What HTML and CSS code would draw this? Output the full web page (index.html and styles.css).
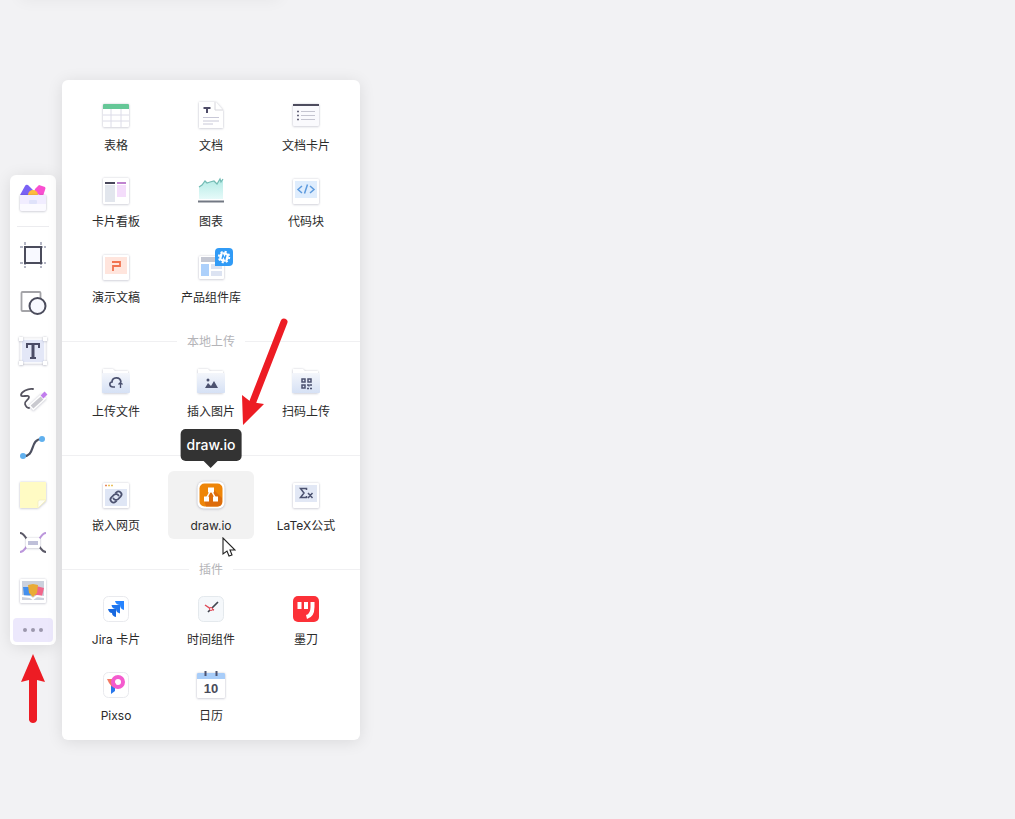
FILE: index.html
```html
<!doctype html>
<html lang="zh-CN">
  <head>
    <meta charset="utf-8" />
    <meta name="viewport" content="width=device-width, initial-scale=1" />
    <title>白板</title>
    <link rel="stylesheet" href="styles.css">
  </head>
  <body>
    <main class="board">
      <div class="top-shadow"></div>
      <div class="dock">
        <nav class="toolbar" aria-label="工具栏">
          <button class="tool tool-first" aria-label="素材">
            <svg class="icon" viewBox="0 0 36 36">
              <path d="M5 15 10 6Q11 4 13 5L18 10 16 17Z" fill="#7a62f5"/>
              <path d="m20 9 4-4 6 2q1 1 0 3l-2 6-9-3Z" fill="#f94fd0"/>
              <circle cx="18" cy="15" r="5" fill="#ffbd3d"/>
              <path class="card" d="M5 15h26v14q0 2-2 2H7q-2 0-2-2Z" fill="#f1edff"/>
              <path d="M5 24h26v5q0 2-2 2H7q-2 0-2-2Z" fill="#fbfaff"/>
              <rect x="14" y="20" width="8" height="4" rx="1" fill="#dfe2fa"/>
            </svg>
          </button>
          <hr class="toolbar-line">
          <button class="tool" aria-label="画框">
            <svg class="icon" viewBox="0 0 36 36" fill="none">
              <path d="M10 5v26M26 5v26M5 10h26M5 26h26" stroke="#b4b6c4" stroke-width="2" stroke-dasharray="3 1"/>
              <rect x="10" y="10" width="16" height="16" fill="#f8f9ff" stroke="#4b4c5c" stroke-width="2"/>
            </svg>
          </button>
          <button class="tool" aria-label="图形">
            <svg class="icon" viewBox="0 0 36 36">
              <rect x="6.500" y="7" width="19" height="19" rx="1" fill="#fff" stroke="#a4a4a8" stroke-width="1.800"/>
              <circle cx="22.500" cy="21" r="8" fill="#f8f9ff" stroke="#4b4c5c" stroke-width="2"/>
            </svg>
          </button>
          <button class="tool" aria-label="文本">
            <svg class="icon" viewBox="0 0 36 36">
              <rect class="card" x="6" y="6" width="24" height="24" fill="#e3e7f7" stroke="#fff" stroke-width="1.500"/>
              <path class="card" d="M4 4h4v4H4zM28 4h4v4h-4zM4 28h4v4H4zM28 28h4v4h-4z" fill="#fff"/>
              <path d="M12 15v-4h12v4M15 25h6" fill="none" stroke="#4b4c66" stroke-width="2"/>
              <path d="M18 11v14" stroke="#4b4c66" stroke-width="3"/>
            </svg>
          </button>
          <button class="tool" aria-label="画笔">
            <svg class="icon" viewBox="0 0 36 36" fill="none">
              <path d="M18 8C13 7 6 11 6 14s8-1 8 2-5 4-4 7 3 4 4 4" stroke="#55535f" stroke-width="1.800" stroke-linecap="round"/>
              <path class="card" d="m16 27 13-12" stroke="#fff" stroke-width="7"/>
              <path d="m17 26 10-9" stroke="#c9c9cf" stroke-width="4"/>
              <path d="m27 16 4-4" stroke="#c17ded" stroke-width="4"/>
            </svg>
          </button>
          <button class="tool" aria-label="连线">
            <svg class="icon" viewBox="0 0 36 36" fill="none">
              <path d="M8 27c13 1 6-17 19-17" stroke="#4d5060" stroke-width="2.200"/>
              <circle cx="8" cy="27" r="3" fill="#60b0ee"/>
              <circle cx="27" cy="10" r="3" fill="#60b0ee"/>
            </svg>
          </button>
          <button class="tool" aria-label="便签">
            <svg class="icon" viewBox="0 0 36 36">
              <path class="card" d="M5 5h26v19l-8 7H5Z" fill="#fffbc4"/>
              <path d="M31 23h-6q-2 0-2 2v6Z" fill="#fffef0" stroke="#f1edc0" stroke-width=".7"/>
            </svg>
          </button>
          <button class="tool" aria-label="思维导图">
            <svg class="icon" viewBox="0 0 36 36" fill="none" stroke-width="2">
              <path d="M5 8c6 0 5 9 13 10 8 1 7 9 13 9" stroke="#5b5967"/>
              <path d="M31 8c-6 0-5 9-13 10-8 1-7 9-13 9" stroke="#bc97dc"/>
              <rect class="card" x="11" y="13" width="14" height="10" rx="1" fill="#fff"/>
              <path d="M13 18h10" stroke="#bfc0d9" stroke-width="4"/>
            </svg>
          </button>
          <button class="tool" aria-label="资源">
            <svg class="icon" viewBox="0 0 36 36">
              <rect class="card" x="5" y="6" width="26" height="24" rx="1" fill="#fff"/>
              <path d="M7 8h22v19H7z" fill="#cbd1dd"/>
              <path d="M8 14h8l2 8-9 1Z" fill="#438fed"/>
              <path d="m21 13 8 2-2 8-8-1Z" fill="#f1668b"/>
              <path d="m13 12 5-1 5 1-1 8-4 4-4-4Z" fill="#e9ab36"/>
              <path d="m7 23 8 1 3 2 4-3 7 1" stroke="#fff" stroke-width="2" fill="none"/>
            </svg>
          </button>
          <button class="tool-more" aria-label="更多" aria-expanded="true">
            <span class="dot"></span><span class="dot"></span><span class="dot"></span>
          </button>
        </nav>

        <section class="panel" aria-label="更多工具">
          <div class="grid">
            <button class="item">
              <svg class="icon" viewBox="0 0 36 36">
                <rect class="card" x="5" y="7" width="26" height="23" rx="1" fill="#fff"/>
                <path d="M5 18h26M5 24h26M13 12v18M23 12v18" stroke="#dcdce8" fill="none"/>
                <path d="M5 12V8q0-1 1-1h24q1 0 1 1v4Z" fill="#65c797"/>
              </svg>
              <span class="label">表格</span>
            </button>
            <button class="item">
              <svg class="icon" viewBox="0 0 36 36" fill="none">
                <path class="card" d="M6 5h17l7 8v18H6Z" fill="#fff"/>
                <path d="M22 5v8h8" stroke="#d6d6dc"/>
                <path d="M10.500 11h7M14 11v5" stroke="#4e4c67" stroke-width="2"/>
                <path d="M10 20.500h16M10 24h16M10 27h10" stroke="#c8c8d7"/>
              </svg>
              <span class="label">文档</span>
            </button>
            <button class="item">
              <svg class="icon" viewBox="0 0 36 36" fill="none">
                <rect class="card" x="5" y="7" width="26" height="22" rx="1" fill="#fafafd"/>
                <path d="M5 8h26" stroke="#4d4c5e" stroke-width="2"/>
                <path d="M13 14.500h14M13 18.500h14M13 22.500h14" stroke="#c5c5d0"/>
                <path d="M9 14.500h2M9 18.500h2M9 22.500h2" stroke="#66657a" stroke-width="1.500"/>
              </svg>
              <span class="label">文档卡片</span>
            </button>
            <button class="item">
              <svg class="icon" viewBox="0 0 36 36">
                <rect class="card" x="5" y="5" width="26" height="26" rx="1" fill="#fff"/>
                <path d="M7 12h10v17H7z" fill="#e2e6ed"/>
                <path d="M19 12h9v12h-9z" fill="#f4ddfb"/>
                <path d="M7 10h10" stroke="#48475a" stroke-width="2"/>
                <path d="M19 10h9" stroke="#bf83cf" stroke-width="2"/>
              </svg>
              <span class="label">卡片看板</span>
            </button>
            <button class="item">
              <svg class="icon" viewBox="0 0 36 36" fill="none">
                <defs>
                  <linearGradient id="chart-fill" x2="0" y2="1">
                    <stop stop-color="#b3ebe5"/>
                    <stop offset="1" stop-color="#e6faf9"/>
                  </linearGradient>
                </defs>
                <path d="m6 14 3-2 3-4 2 2 3-1 4-1 3 3 3-5 1 3 2-3v20H6Z" fill="url(#chart-fill)"/>
                <path d="m6 14 3-2 3-4 2 2 3-1 4-1 3 3 3-5 1 3 2-3" stroke="#72bbb4" stroke-width="1.200"/>
                <path d="M5 28.500h26" stroke="#727883" stroke-width="2"/>
              </svg>
              <span class="label">图表</span>
            </button>
            <button class="item">
              <svg class="icon" viewBox="0 0 36 36" fill="none">
                <rect class="card" x="5" y="6" width="26" height="25" rx="1" fill="#fff"/>
                <path d="M7 8h22v17H7z" fill="#dfedfd"/>
                <path d="m14 13-4 3.500 4 3.500M22 13l4 3.500-4 3.500M19.500 11.500l-3 9" stroke="#5c9ade" stroke-width="1.500"/>
              </svg>
              <span class="label">代码块</span>
            </button>
            <button class="item">
              <svg class="icon" viewBox="0 0 36 36" fill="none">
                <rect class="card" x="5" y="6" width="26" height="25" rx="1" fill="#fff"/>
                <path d="M7 8h22v17H7z" fill="#ffe5dd"/>
                <path d="M14 13h8v4h-7v5" stroke="#f17350" stroke-width="1.800"/>
              </svg>
              <span class="label">演示文稿</span>
            </button>
            <button class="item">
              <svg class="icon" viewBox="0 0 36 36" fill="none">
                <rect class="card" x="6" y="7" width="25" height="23" rx="1" fill="#fff"/>
                <path d="M8 8h15v5H8z" fill="#c5c8d3"/>
                <path d="M8 15h8v12H8z" fill="#acd0fb"/>
                <path d="M18 15h11v5H18zM18 22h11v5H18z" fill="#dce3f2"/>
                <path d="M26-1h10q4 0 4 4v10q0 4-4 4H22V3q0-4 4-4Z" fill="#319bf6"/>
                <circle cx="31" cy="8" r="4.800" fill="#fff"/>
                <circle cx="31" cy="8" r="5.300" stroke="#fff" stroke-width="1.800" stroke-dasharray="2.100 2.060"/>
                <path d="m29 10 1-4 2 4 1-4" stroke="#319bf6" stroke-width="1.300"/>
              </svg>
              <span class="label">产品组件库</span>
            </button>
          </div>

          <div class="divider"><span>本地上传</span></div>

          <div class="grid">
            <button class="item">
              <svg class="icon" viewBox="0 0 36 36" fill="none">
                <defs>
                  <linearGradient id="folder-fill" x2="0" y2="1">
                    <stop stop-color="#f4f6fb"/>
                    <stop offset="1" stop-color="#d6e1f5"/>
                  </linearGradient>
                </defs>
                <path class="card" d="M5 30V6h10l2 2h13v22Z" fill="#fff"/>
                <rect x="4" y="10" width="28" height="20" rx="1" fill="url(#folder-fill)"/>
                <path d="M17 24h-2c-4 0-4-5-1-5 0-5 8-6 9 0" stroke="#4c5270" stroke-width="1.700"/>
                <path d="M22.500 25v-5M20.500 21.500l2-2 2 2" stroke="#4c5270" stroke-width="1.300"/>
              </svg>
              <span class="label">上传文件</span>
            </button>
            <button class="item">
              <svg class="icon" viewBox="0 0 36 36">
                <path class="card" d="M5 30V6h10l2 2h13v22Z" fill="#fff"/>
                <rect x="4" y="10" width="28" height="20" rx="1" fill="url(#folder-fill)"/>
                <path d="m12 25 3-5 3 3 3-5 4 7Z" fill="#4c5270"/>
                <circle cx="15" cy="17" r="1.500" fill="#4c5270"/>
              </svg>
              <span class="label">插入图片</span>
            </button>
            <button class="item">
              <svg class="icon" viewBox="0 0 36 36" fill="none" stroke="#4c5270" stroke-width="1.500">
                <path class="card" d="M5 30V6h10l2 2h13v22Z" fill="#fff" stroke="none"/>
                <rect x="4" y="10" width="28" height="20" rx="1" fill="url(#folder-fill)" stroke="none"/>
                <path d="M14 16h3v3h-3zM20 16h3v3h-3zM14 22h3v3h-3zM19 22h2v1.500M22 22h2M19 25.500h2M22 25.500h2"/>
              </svg>
              <span class="label">扫码上传</span>
            </button>
          </div>

          <div class="divider divider-plain"></div>

          <div class="grid">
            <button class="item">
              <svg class="icon" viewBox="0 0 36 36" fill="none">
                <rect class="card" x="5" y="6" width="26" height="25" rx="1" fill="#fff"/>
                <path d="M7 12h22v17H7z" fill="#dfe6f5"/>
                <path d="M7 8.500h2" stroke="#e8895c" stroke-width="1.500"/>
                <path d="M10 8.500h2M13 8.500h2" stroke="#eac15e" stroke-width="1.500"/>
                <g transform="rotate(-45 18 20)" stroke="#4c5270" stroke-width="1.700">
                  <path d="M16 23h-1.500a3 3 0 0 1 0-6H18a3 3 0 0 1 2.500 4.500"/>
                  <path d="M20 17h1.500a3 3 0 0 1 0 6H18a3 3 0 0 1-2.500-4.500"/>
                </g>
              </svg>
              <span class="label">嵌入网页</span>
            </button>
            <button class="item item-active" aria-describedby="drawio-tip">
              <svg class="icon" viewBox="0 0 36 36">
                <rect class="card" x="4.500" y="4.500" width="27" height="27" rx="6" fill="#fff"/>
                <rect x="6.500" y="6.500" width="23" height="23" rx="5" fill="#ee8508"/>
                <path d="m20 12 9 9v4q0 4.500-5 4.500H13l-2-7Z" fill="#dd6c0c"/>
                <path d="m18 13-5 9M18 13l5 9" stroke="#fff" stroke-width="1.500"/>
                <path d="M15 10.500h6v5h-6zM11 19.500h5v5h-5zM20 19.500h5v5h-5z" fill="#fff"/>
              </svg>
              <span class="label">draw.io</span>
              <span class="tooltip" id="drawio-tip" role="tooltip">draw.io</span>
              <svg class="cursor" viewBox="0 0 14 20">
                <path d="M1 1v16l4-3 2 5 3-1-2-5h5Z" fill="#fff" stroke="#222" stroke-width="1.100"/>
              </svg>
            </button>
            <button class="item">
              <svg class="icon" viewBox="0 0 36 36" fill="none">
                <rect class="card" x="5" y="6" width="26" height="25" rx="1" fill="#fff"/>
                <path d="M7 8h22v17H7z" fill="#e2e8f5"/>
                <path d="M18.500 13v-1.500h-6L16 16l-3.500 4.500h6V19M20 16l4.500 5M24.500 16 20 21" stroke="#4c5270" stroke-width="1.500"/>
              </svg>
              <span class="label">LaTeX公式</span>
            </button>
          </div>

          <div class="divider"><span>插件</span></div>

          <div class="grid">
            <button class="item">
              <svg class="icon" viewBox="0 0 36 36">
                <rect x="5.500" y="5.500" width="25" height="25" rx="5" fill="#fff" stroke="#e9eaee"/>
                <path d="M17 10h9v9q-4-1-4-5-4 0-5-4Z" fill="#2684ff"/>
                <path d="M13.500 14h8.500v8.500q-4-1-4-4.500-4 0-4.500-4Z" fill="#2076ee"/>
                <path d="M10 18h8v8q-4-1-4-4-3 0-4-4Z" fill="#1768df"/>
              </svg>
              <span class="label">Jira 卡片</span>
            </button>
            <button class="item">
              <svg class="icon" viewBox="0 0 36 36" fill="none">
                <rect x="5.500" y="5.500" width="25" height="25" rx="5" fill="#f5f8fb" stroke="#e4e9ed"/>
                <path d="m19 17 6-6M17 19l-2 2" stroke="#424650" stroke-width="1.700"/>
                <path d="m12 14 6 4 3 1" stroke="#e04856" stroke-width="1.400"/>
                <circle cx="18" cy="18" r="1.500" fill="#fff" stroke="#e04856"/>
              </svg>
              <span class="label">时间组件</span>
            </button>
            <button class="item">
              <svg class="icon" viewBox="0 0 36 36" fill="none">
                <rect x="5" y="5" width="26" height="26" rx="5" fill="#fc3138"/>
                <path d="M11.500 11v7M18 11v7" stroke="#fff" stroke-width="4"/>
                <path d="M24.500 11v5c0 6-2 9-6 10" stroke="#fff" stroke-width="4"/>
              </svg>
              <span class="label">墨刀</span>
            </button>
            <button class="item">
              <svg class="icon" viewBox="0 0 36 36" fill="none">
                <rect x="5.500" y="5.500" width="25" height="25" rx="5" fill="#fff" stroke="#e9eaee"/>
                <path d="M13 17h4v7l-4 3Z" fill="#2878ed"/>
                <path d="M9 12h6l5 9q-7 1-11-9Z" fill="#f37b65"/>
                <circle cx="20" cy="15" r="5" stroke="#f45bce" stroke-width="4"/>
              </svg>
              <span class="label">Pixso</span>
            </button>
            <button class="item">
              <svg class="icon" viewBox="0 0 36 36">
                <rect class="card" x="4" y="6" width="28" height="25" rx="1" fill="#fff"/>
                <path d="M4 12V7q0-1 1-1h26q1 0 1 1v5Z" fill="#a8cdf9"/>
                <path d="M12.500 4v5M23.500 4v5" stroke="#4c5270" stroke-width="2"/>
                <text class="day" x="18" y="26" text-anchor="middle">10</text>
              </svg>
              <span class="label">日历</span>
            </button>
          </div>
        </section>

        <svg class="arrow arrow-up" viewBox="0 0 24 70">
          <path d="M12 0 24 28 16 26v40q-1 3-4 3t-4-3V26L0 28Z" fill="#ed1c24"/>
        </svg>
        <svg class="arrow arrow-down" viewBox="0 0 46 108">
          <path d="M42 4 10 86" stroke="#ed1c24" stroke-width="7" stroke-linecap="round"/>
          <path d="M1 107 0 77l9 7 13 2Z" fill="#ed1c24"/>
        </svg>
      </div>
    </main>
  </body>
</html>
```
FILE: styles.css
```css
* {
  box-sizing: border-box;
}

body {
  margin: 0;
  background: #f2f2f4;
  color: #2b2b2b;
  font-family: Inter, "Noto Sans CJK SC", sans-serif;
}

button {
  padding: 0;
  border: none;
  background: none;
  color: inherit;
  font: inherit;
  cursor: pointer;
}

.board {
  position: relative;
  display: flex;
  align-items: center;
  min-height: 100vh;
  padding-left: 10px;
  overflow: hidden;
}

/* Shadow of the header bar, which sits above the canvas */
.top-shadow {
  position: absolute;
  top: -20px;
  left: 20px;
  width: 260px;
  height: 20px;
  box-shadow: 0 0 16px rgba(0, 0, 0, 0.05);
}

.dock {
  position: relative;
  display: flex;
  align-items: center;
  gap: 6px;
}

.toolbar,
.panel {
  background: #fff;
  border-radius: 6px;
  box-shadow: 0 2px 16px rgba(0, 0, 0, 0.1);
}

.toolbar {
  display: flex;
  flex-direction: column;
  width: 46px;
  padding: 3px;
}

.tool {
  display: flex;
  align-items: center;
  justify-content: center;
  height: 48px;
}

.tool-first {
  height: 40px;
}

.toolbar-line {
  width: 32px;
  height: 1px;
  margin: 8px auto 4px;
  border: none;
  background: #ececef;
}

.tool-more {
  display: flex;
  align-items: center;
  justify-content: center;
  gap: 4px;
  height: 24px;
  margin-top: 3px;
  border-radius: 4px;
  background: #ece8fc;
}

.dot {
  width: 4px;
  height: 4px;
  border-radius: 50%;
  background: #9c98ad;
}

.icon {
  display: block;
  width: 36px;
  height: 36px;
  overflow: visible;
}

.card {
  filter: drop-shadow(0 0 1px rgba(30, 35, 70, 0.2)) drop-shadow(0 1px 1px rgba(30, 35, 70, 0.12));
}

.day {
  fill: #484b59;
  font-family: "Liberation Sans", sans-serif;
  font-size: 13px;
  font-weight: 700;
}

.panel {
  padding: 11px 0;
}

.grid {
  display: grid;
  grid-template-columns: repeat(3, 86px);
  gap: 8px 9px;
  padding: 0 11px;
}

.item {
  position: relative;
  display: flex;
  flex-direction: column;
  align-items: center;
  justify-content: flex-start;
  gap: 5px;
  height: 68px;
  padding-top: 6px;
  border-radius: 6px;
}

.item-active {
  background: #f2f2f2;
}

.label {
  font-size: 12px;
  line-height: 16px;
  white-space: nowrap;
}

.divider {
  display: flex;
  align-items: center;
  gap: 10px;
  height: 16px;
  margin: 23px 0 7px;
  color: #b4b4b8;
  font-size: 12px;
  line-height: 16px;
}

.divider::before,
.divider::after {
  content: "";
  flex: 1;
  height: 1px;
  background: #f0f0f2;
}

.divider-plain {
  gap: 0;
}

.tooltip {
  position: absolute;
  bottom: calc(100% + 10px);
  left: 50%;
  padding: 6px;
  border-radius: 5px;
  background: #333;
  color: #fff;
  font-size: 14px;
  font-weight: 500;
  line-height: 20px;
  transform: translateX(-50%);
}

.tooltip::after {
  content: "";
  position: absolute;
  top: 100%;
  left: 50%;
  margin-left: -7px;
  border: 7px solid transparent;
  border-top-color: #333;
  border-bottom: none;
}

.cursor {
  position: absolute;
  top: 66px;
  left: 54px;
  width: 14px;
  height: 20px;
}

.arrow {
  position: absolute;
  pointer-events: none;
}

.arrow-up {
  top: 574px;
  left: 11px;
  width: 24px;
  height: 70px;
}

.arrow-down {
  top: 238px;
  left: 232px;
  width: 46px;
  height: 108px;
}
```
